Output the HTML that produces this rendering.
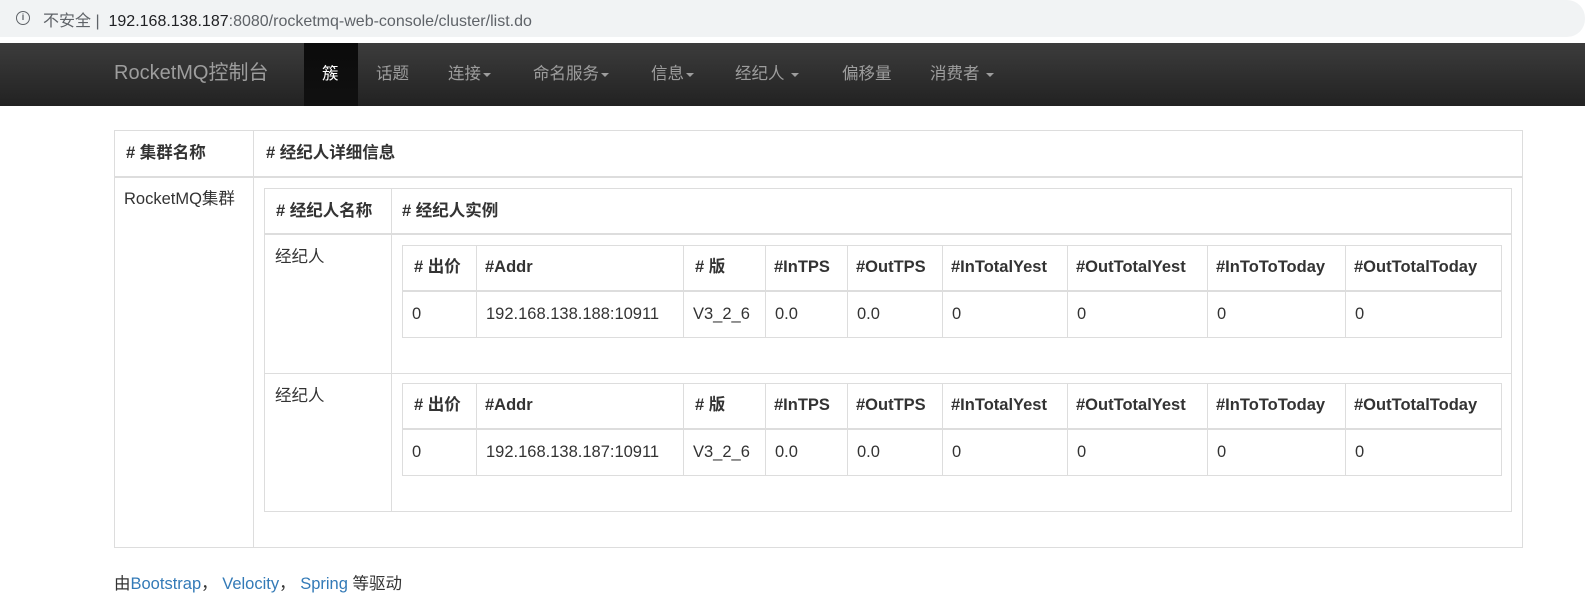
<!DOCTYPE html>
<html><head><meta charset="utf-8"><style>
*{margin:0;padding:0;box-sizing:border-box}
body{width:1585px;height:616px;position:relative;background:#fff;font-family:"Liberation Sans","Noto Sans CJK SC",sans-serif;color:#333;overflow:hidden}
.a{position:absolute}
.h{position:absolute;height:1px;background:#ddd}
.h2{position:absolute;height:2px;background:#ddd}
.v{position:absolute;width:1px;background:#ddd}
.t{position:absolute;font-size:16.5px;white-space:nowrap;line-height:20px}
.b{font-weight:bold}
.nav{position:absolute;top:64px;font-size:16.5px;color:#9d9d9d;line-height:20px;white-space:nowrap}
.car{display:inline-block;width:0;height:0;border-left:4px solid transparent;border-right:4px solid transparent;border-top:4px solid #9d9d9d;vertical-align:middle;margin-left:2px}
</style></head><body>
<div class="a" style="left:0;top:0;width:1585px;height:37px;background:#f1f3f4;border-radius:0 18px 18px 0"></div>
<div class="a" style="left:16px;top:11px;width:14px;height:14px;border:1.5px solid #5f6368;border-radius:50%;font-size:9px;line-height:11px;text-align:center;color:#5f6368;font-weight:bold">i</div>
<div class="a" style="left:43px;top:7px;font-size:16px;color:#5f6368;white-space:nowrap">不安全 | &nbsp;<span style="color:#202124">192.168.138.187</span>:8080/rocketmq-web-console/cluster/list.do</div>
<div class="a" style="left:0;top:43px;width:1585px;height:63px;background:linear-gradient(#3c3c3c,#222)"></div>
<div class="a" style="left:304px;top:43px;width:54px;height:63px;background:linear-gradient(#0b0b0b,#111)"></div>
<div class="nav" style="left:114px;top:63px;font-size:20px;color:#9d9d9d">RocketMQ控制台</div>
<div class="nav" style="left:322px;color:#fff">簇</div>
<div class="nav" style="left:376px">话题</div>
<div class="nav" style="left:448px">连接<span class="car"></span></div>
<div class="nav" style="left:533px">命名服务<span class="car"></span></div>
<div class="nav" style="left:651px">信息<span class="car"></span></div>
<div class="nav" style="left:735px">经纪人 <span class="car"></span></div>
<div class="nav" style="left:842px">偏移量</div>
<div class="nav" style="left:930px">消费者 <span class="car"></span></div>

<div class="a" style="left:114px;top:130px;width:1409px;height:418px;border:1px solid #ddd"></div>
<div class="h2" style="left:114px;top:176px;width:1409px"></div>
<div class="v" style="left:253px;top:130px;height:418px"></div>
<div class="t b" style="left:126px;top:143px"># 集群名称</div>
<div class="t b" style="left:266px;top:143px"># 经纪人详细信息</div>
<div class="t" style="left:124px;top:189px">RocketMQ集群</div>

<div class="a" style="left:264px;top:188px;width:1248px;height:324px;border:1px solid #ddd"></div>
<div class="h2" style="left:264px;top:233px;width:1248px"></div>
<div class="h" style="left:264px;top:373px;width:1248px"></div>
<div class="v" style="left:391px;top:188px;height:324px"></div>
<div class="t b" style="left:276px;top:201px"># 经纪人名称</div>
<div class="t b" style="left:402px;top:201px"># 经纪人实例</div>
<div class="t" style="left:275px;top:247px">经纪人</div>
<div class="t" style="left:275px;top:386px">经纪人</div>

<div id="x1"></div>
<script>
(function(){
var cols=[402,476,683,765,847,942,1067,1207,1345,1501];
var hd=["# 出价","#Addr","# 版","#InTPS","#OutTPS","#InTotalYest","#OutTotalYest","#InToToToday","#OutTotalToday"];
var rows=[["0","192.168.138.188:10911","V3_2_6","0.0","0.0","0","0","0","0"],["0","192.168.138.187:10911","V3_2_6","0.0","0.0","0","0","0","0"]];
var out="";
[245,383].forEach(function(y,k){
 out+='<div class="a" style="left:402px;top:'+y+'px;width:1100px;height:93px;border:1px solid #ddd"></div>';
 out+='<div class="h2" style="left:402px;top:'+(y+45)+'px;width:1100px"></div>';
 for(var i=1;i<cols.length-1;i++) out+='<div class="v" style="left:'+cols[i]+'px;top:'+y+'px;height:93px"></div>';
 for(var i=0;i<9;i++){
  out+='<div class="t b" style="left:'+(cols[i]+(i==0?12:i==2?12:9))+'px;top:'+(y+12)+'px">'+hd[i]+'</div>';
  out+='<div class="t" style="left:'+(cols[i]+10)+'px;top:'+(y+59)+'px">'+rows[k][i]+'</div>';
 }
});
document.getElementById("x1").outerHTML=out;
})();
</script>

<div class="t" style="left:114px;top:574px">由<span style="color:#337ab7">Bootstrap</span>， <span style="color:#337ab7">Velocity</span>， <span style="color:#337ab7">Spring</span> 等驱动</div>
</body></html>
